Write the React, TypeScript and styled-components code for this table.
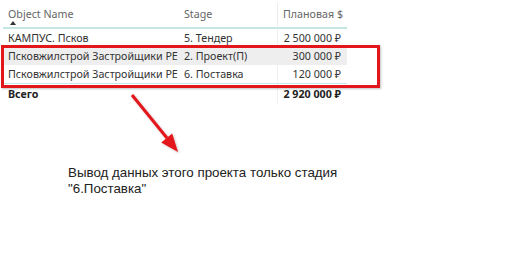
import React from "react";
import styled, { createGlobalStyle } from "styled-components";

const Global = createGlobalStyle`
  html, body { margin: 0; padding: 0; background: #ffffff; }
  body { width: 529px; height: 254px; overflow: hidden; }
`;

const Page = styled.div`
  position: relative;
  width: 529px;
  height: 254px;
  padding: 3px 0 0 3px;
  box-sizing: border-box;
  font-family: "Noto Sans", "Open Sans", sans-serif;
`;

const Table = styled.div`
  width: 344px;
  display: grid;
  grid-template-columns: 176px 98px 70px;
`;

const HeadCell = styled.div<{ $right?: boolean; $divider?: boolean }>`
  position: relative;
  height: 26px;
  box-sizing: border-box;
  padding: 3px ${(p) => (p.$right ? "6px" : "5px")} 0 5px;
  font-size: 10.7px;
  line-height: 16px;
  color: #666666;
  text-align: ${(p) => (p.$right ? "right" : "left")};
  border-bottom: 2px solid #c4e7e4;
  border-left: ${(p) => (p.$divider ? "1px solid #ececec" : "none")};
  white-space: nowrap;
`;

const SortMark = styled.span`
  position: absolute;
  left: 7px;
  top: 18px;
  width: 0;
  height: 0;
  border-left: 3px solid transparent;
  border-right: 3px solid transparent;
  border-bottom: 4px solid #333333;
`;

const Row = styled.div<{ $hover?: boolean; $total?: boolean }>`
  display: contents;
  & > div {
    background: ${(p) => (p.$hover ? "#eeeeee" : "transparent")};
    font-weight: ${(p) => (p.$total ? 700 : 400)};
    color: ${(p) => (p.$total ? "#222222" : "#333333")};
    border-top: ${(p) => (p.$total ? "1px solid #c4e7e4" : "none")};
    padding-top: ${(p) => (p.$total ? "1px" : "0")};
  }
`;

const Cell = styled.div<{ $right?: boolean; $divider?: boolean }>`
  height: 18px;
  box-sizing: content-box;
  padding-left: 5px;
  padding-right: ${(p) => (p.$right ? "6px" : "5px")};
  font-size: 10.7px;
  line-height: 18px;
  text-align: ${(p) => (p.$right ? "right" : "left")};
  white-space: nowrap;
  overflow: hidden;
  border-left: ${(p) => (p.$divider ? "1px solid #f0f0f0" : "none")};
`;

const RedBox = styled.div`
  position: absolute;
  left: 1px;
  top: 45px;
  width: 379px;
  height: 43px;
  box-sizing: border-box;
  border: 3px solid #e3161c;
  box-shadow: 1px 1px 2px rgba(0, 0, 0, 0.25);
  pointer-events: none;
`;

const Arrow = styled.svg`
  position: absolute;
  left: 120px;
  top: 85px;
  overflow: visible;
`;

const Note = styled.div`
  margin: 62px 0 0 65px;
  font-family: "Liberation Sans", Arial, sans-serif;
  font-size: 13.33px;
  line-height: 16px;
  color: #222222;
`;

type Item = { name: string; stage: string; amount: string; hover?: boolean };

const rows: Item[] = [
  { name: "КАМПУС. Псков", stage: "5. Тендер", amount: "2 500 000 ₽" },
  { name: "Псковжилстрой Застройщики РЕ", stage: "2. Проект(П)", amount: "300 000 ₽", hover: true },
  { name: "Псковжилстрой Застройщики РЕ", stage: "6. Поставка", amount: "120 000 ₽" },
];

export default function App() {
  return (
    <>
      <Global />
      <Page>
        <Table>
          <HeadCell>
            Object Name
            <SortMark />
          </HeadCell>
          <HeadCell>Stage</HeadCell>
          <HeadCell $right $divider>
            Плановая $
          </HeadCell>
          {rows.map((r, i) => (
            <Row key={i} $hover={r.hover}>
              <Cell>{r.name}</Cell>
              <Cell>{r.stage}</Cell>
              <Cell $right $divider>
                {r.amount}
              </Cell>
            </Row>
          ))}
          <Row $total>
            <Cell>Всего</Cell>
            <Cell></Cell>
            <Cell $right $divider>
              2 920 000 ₽
            </Cell>
          </Row>
        </Table>
        <RedBox />
        <Arrow width="70" height="70" viewBox="0 0 70 70">
          <defs>
            <filter id="sh" x="-20%" y="-20%" width="150%" height="150%">
              <feDropShadow dx="1" dy="1" stdDeviation="1" floodColor="#000" floodOpacity="0.25" />
            </filter>
          </defs>
          <g filter="url(#sh)">
            <line x1="12" y1="10" x2="47" y2="53" stroke="#e3161c" strokeWidth="3" />
            <polygon points="58,67 41.2,57.4 52.2,48.6" fill="#e3161c" />
          </g>
        </Arrow>
        <Note>
          Вывод данных этого проекта только стадия
          <br />
          "6.Поставка"
        </Note>
      </Page>
    </>
  );
}
